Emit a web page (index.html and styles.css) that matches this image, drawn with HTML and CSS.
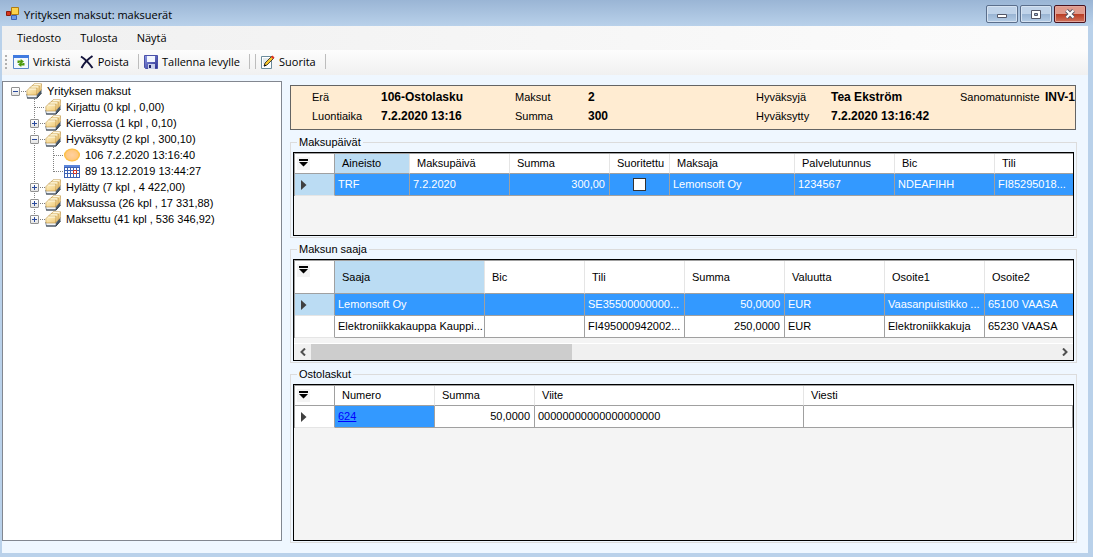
FILE: index.html
```html
<!DOCTYPE html>
<html lang="fi">
<head>
  <meta charset="UTF-8" />
  <title>Yrityksen maksut: maksuerät</title>
  <link rel="stylesheet" href="styles.css">
</head>
<body>

<!-- shared icons -->
<svg class="defs" aria-hidden="true">
  <defs>
    <linearGradient id="card" x1="0" y1="0" x2="1" y2="1">
      <stop offset="0" stop-color="#fff3c8"/>
      <stop offset="1" stop-color="#efc878"/>
    </linearGradient>
    <radialGradient id="coin">
      <stop offset="0" stop-color="#ffd0a0"/>
      <stop offset="0.7" stop-color="#ffc880"/>
      <stop offset="1" stop-color="#fbb92a"/>
    </radialGradient>
    <linearGradient id="disk" x1="0" y1="0" x2="1" y2="1">
      <stop offset="0" stop-color="#8f9be6"/>
      <stop offset="1" stop-color="#2b2f8e"/>
    </linearGradient>
    <symbol id="i-folder" viewBox="0 0 16 16">
      <path d="M10.500 12.500 15.500 6v4L11 15.500z" fill="#4a5a68"/>
      <path d="M.5 11.500h10.500v3.500H1.500z" fill="#eef2f6" stroke="#5c6c7c" stroke-width=".7"/>
      <path d="M1 15h10l4.500-5" fill="none" stroke="#303c48"/>
      <path d="M6 3 8 .8h7.600l-.4 6.200-2.200 2z" fill="url(#card)" stroke="#b98d3e" stroke-width=".6"/>
      <path d="M3.500 5.200 5.500 3h7.800l-.3 6-2 2z" fill="url(#card)" stroke="#b98d3e" stroke-width=".6"/>
      <path d="M.8 7.800 3.200 5.200H11l-.3 6.800H1z" fill="url(#card)" stroke="#b98d3e" stroke-width=".6"/>
      <path d="M3.200 6h7M5.800 3.800h6.600M8.200 1.600h6.400" stroke="#fffbe8"/>
    </symbol>
    <symbol id="i-filter" viewBox="0 0 13 13">
      <path fill="#f4f4f4" d="M0 0h13v13H0z"/>
      <path d="M2 2h9v2H2zM2 5h9L6.500 9.500z"/>
    </symbol>
    <symbol id="i-row" viewBox="0 0 8 12">
      <path d="M1 1v10L6.500 6z" fill="#404040"/>
    </symbol>
  </defs>
</svg>

<div class="window">
  <header class="titlebar">
    <svg class="app-icon" viewBox="0 0 14 14" width="14" height="14">
      <path d="M5.500.5h7v7h-7z" fill="#fdd34d" stroke="#b07c10"/>
      <path d="M.5 4.500h4v4h-4z" fill="#d8371c" stroke="#8c1c0c"/>
      <path d="M5.500 8.500h5v4h-5z" fill="#6d9ae8" stroke="#3c62b5"/>
    </svg>
    <h1>Yrityksen maksut: maksuerät</h1>
    <div class="window-buttons">
      <button type="button" aria-label="Pienennä">
        <svg viewBox="0 0 12 10" width="12" height="10"><path d="M1.500 5.500h9v3h-9z" fill="#fff" stroke="#535666"/></svg>
      </button>
      <button type="button" aria-label="Suurenna">
        <svg viewBox="0 0 12 10" width="12" height="10"><path d="M1.500 1.500h9v8h-9z" fill="#fff" stroke="#535666"/><path d="M4.500 4.500h3v2h-3z" fill="#9db7d4" stroke="#535666"/></svg>
      </button>
      <button type="button" class="close" aria-label="Sulje">
        <svg viewBox="0 0 12 10" width="12" height="10"><path d="M2.500 1.500l7 7M9.500 1.500l-7 7" stroke="#535666" stroke-width="4"/><path d="M2.500 1.500l7 7M9.500 1.500l-7 7" stroke="#fff" stroke-width="2.200"/></svg>
      </button>
    </div>
  </header>

  <nav class="menubar">
    <button type="button">Tiedosto</button>
    <button type="button">Tulosta</button>
    <button type="button">Näytä</button>
  </nav>

  <div class="toolbar">
    <span class="grip"></span>
    <button type="button">
      <svg viewBox="0 0 16 16" width="16" height="16">
        <path d="M.5 1.500h15v13H.5z" fill="#f4f8fe" stroke="#5a86c8"/>
        <path d="M0 1h16v3H0z" fill="#3f7ae0"/>
        <path d="M4.500 9V6.500h3.200V5L11 7.500 7.700 10V8.500H6.300V9zM11.500 9v2.500H8.300V13L5 10.500 8.300 8v1.500h1.400V9z" fill="#4c9a0c"/>
      </svg>
      Virkistä
    </button>
    <button type="button">
      <svg viewBox="0 0 14 14" width="14" height="14">
        <path d="M1 1.500C5 4 9 8 12.500 13M12.500 1C8 4 4 8 1.500 13" fill="none" stroke="#14143c" stroke-width="2"/>
      </svg>
      Poista
    </button>
    <span class="sep"></span>
    <button type="button">
      <svg viewBox="0 0 14 14" width="14" height="14">
        <path d="M.5.5h13v13h-12l-1-1z" fill="url(#disk)" stroke="#4a50a8"/>
        <path d="M3 1h8v6H3z" fill="#f2f6ff"/>
        <path d="M4 9h7v5H4z" fill="#c9d0ea"/>
        <path d="M5 10h2v3H5z" fill="#23286e"/>
      </svg>
      Tallenna levylle
    </button>
    <span class="sep"></span>
    <span class="sep"></span>
    <button type="button">
      <svg viewBox="0 0 14 14" width="14" height="14">
        <path d="M.5 1.500h10v12H.5z" fill="#fff" stroke="#6c8c9c"/>
        <path d="M2 4h6M2 6h5M2 8h3" stroke="#c4d4dc"/>
        <path d="M3 11l1-3 6.500-6.500 2 2L6 10z" fill="#f5c52c" stroke="#222" stroke-width=".8"/>
        <path d="M10 2l1.500-1.500 2 2L12 4z" fill="#e03020"/>
        <path d="M3 11.500l.8-2.200 1.500 1.400z"/>
      </svg>
      Suorita
    </button>
    <span class="sep"></span>
  </div>

  <main class="content">
    <aside class="tree">
      <ul>
        <li>
          <div class="node"><button type="button" class="toggle open" aria-label="Sulje"></button><span class="link"></span><svg><use href="#i-folder"/></svg>Yrityksen maksut</div>
          <ul>
            <li><div class="node"><span class="link leaf"></span><svg><use href="#i-folder"/></svg>Kirjattu (0 kpl , 0,00)</div></li>
            <li><div class="node"><button type="button" class="toggle" aria-label="Avaa"></button><span class="link"></span><svg><use href="#i-folder"/></svg>Kierrossa (1 kpl , 0,10)</div></li>
            <li>
              <div class="node"><button type="button" class="toggle open" aria-label="Sulje"></button><span class="link"></span><svg><use href="#i-folder"/></svg>Hyväksytty (2 kpl , 300,10)</div>
              <ul>
                <li><div class="node"><span class="link leaf"></span><svg viewBox="0 0 16 16"><ellipse cx="8" cy="8" rx="8" ry="6.500" fill="url(#coin)"/></svg>106 7.2.2020 13:16:40</div></li>
                <li><div class="node"><span class="link leaf"></span><svg viewBox="0 0 16 16">
                  <path d="M0 2h16v13H0z" fill="#3e62b4"/>
                  <path d="M0 2h16v2H0z" fill="#5b86dc"/>
                  <path d="M1 5h2v2H1zM4 5h2v2H4zM7 5h2v2H7zM10 5h2v2h-2zM13 5h2v2h-2zM1 8h2v2H1zM4 8h2v2H4zM7 8h2v2H7zM13 8h2v2h-2zM1 11h2v3H1zM4 11h2v3H4zM7 11h2v3H7zM10 11h2v3h-2zM13 11h2v3h-2z" fill="#fff"/>
                  <path d="M9.500 7.500h3v3h-3z" fill="#fff" stroke="#d8301c"/>
                </svg>89 13.12.2019 13:44:27</div></li>
              </ul>
            </li>
            <li><div class="node"><button type="button" class="toggle" aria-label="Avaa"></button><span class="link"></span><svg><use href="#i-folder"/></svg>Hylätty (7 kpl , 4 422,00)</div></li>
            <li><div class="node"><button type="button" class="toggle" aria-label="Avaa"></button><span class="link"></span><svg><use href="#i-folder"/></svg>Maksussa (26 kpl , 17 331,88)</div></li>
            <li><div class="node"><button type="button" class="toggle" aria-label="Avaa"></button><span class="link"></span><svg><use href="#i-folder"/></svg>Maksettu (41 kpl , 536 346,92)</div></li>
          </ul>
        </li>
      </ul>
    </aside>

    <section class="details">
      <dl class="summary">
        <dt>Erä</dt><dd>106-Ostolasku</dd>
        <dt>Maksut</dt><dd>2</dd>
        <dt>Hyväksyjä</dt><dd>Tea Ekström</dd>
        <dt>Sanomatunniste</dt><dd>INV-1</dd>
        <dt>Luontiaika</dt><dd>7.2.2020 13:16</dd>
        <dt>Summa</dt><dd>300</dd>
        <dt>Hyväksytty</dt><dd>7.2.2020 13:16:42</dd>
      </dl>

      <fieldset class="group">
        <legend>Maksupäivät</legend>
        <div class="grid dates">
          <table>
            <colgroup>
              <col class="w-head"><col class="w-75"><col class="w-100"><col class="w-100"><col class="w-60"><col class="w-125"><col class="w-100"><col class="w-100"><col>
            </colgroup>
            <thead>
              <tr>
                <th class="corner"><svg><use href="#i-filter"/></svg></th>
                <th class="current">Aineisto</th><th>Maksupäivä</th><th>Summa</th><th>Suoritettu</th><th>Maksaja</th><th>Palvelutunnus</th><th>Bic</th><th>Tili</th>
              </tr>
            </thead>
            <tbody>
              <tr class="selected">
                <td class="marker"><svg><use href="#i-row"/></svg></td>
                <td>TRF</td><td>7.2.2020</td><td class="num">300,00</td><td class="check"><input type="checkbox" aria-label="Suoritettu"></td><td>Lemonsoft Oy</td><td>1234567</td><td>NDEAFIHH</td><td>FI85295018...</td>
              </tr>
            </tbody>
          </table>
        </div>
      </fieldset>

      <fieldset class="group">
        <legend>Maksun saaja</legend>
        <div class="grid">
          <table class="payees">
            <colgroup>
              <col class="w-head"><col class="w-150"><col class="w-100"><col class="w-100"><col class="w-100"><col class="w-100"><col class="w-100"><col>
            </colgroup>
            <thead>
              <tr>
                <th class="corner"><svg><use href="#i-filter"/></svg></th>
                <th class="current">Saaja</th><th>Bic</th><th>Tili</th><th>Summa</th><th>Valuutta</th><th>Osoite1</th><th>Osoite2</th>
              </tr>
            </thead>
            <tbody>
              <tr class="selected">
                <td class="marker"><svg><use href="#i-row"/></svg></td>
                <td>Lemonsoft Oy</td><td></td><td>SE35500000000...</td><td class="num">50,0000</td><td>EUR</td><td>Vaasanpuistikko ...</td><td>65100 VAASA</td>
              </tr>
              <tr>
                <td class="marker"></td>
                <td>Elektroniikkakauppa Kauppi...</td><td></td><td>FI495000942002...</td><td class="num">250,0000</td><td>EUR</td><td>Elektroniikkakuja</td><td>65230 VAASA</td>
              </tr>
            </tbody>
          </table>
          <div class="scrollbar">
            <button type="button" aria-label="Vasemmalle"><svg viewBox="0 0 8 8"><path d="M6 .5 2.500 4 6 7.500"/></svg></button>
            <div class="track"><div class="thumb"></div></div>
            <button type="button" aria-label="Oikealle"><svg viewBox="0 0 8 8"><path d="M2 .5 5.500 4 2 7.500"/></svg></button>
          </div>
        </div>
      </fieldset>

      <fieldset class="group fill">
        <legend>Ostolaskut</legend>
        <div class="grid">
          <table class="invoices">
            <colgroup>
              <col class="w-head"><col class="w-100"><col class="w-100"><col class="w-269"><col>
            </colgroup>
            <thead>
              <tr>
                <th class="corner"><svg><use href="#i-filter"/></svg></th>
                <th>Numero</th><th>Summa</th><th>Viite</th><th>Viesti</th>
              </tr>
            </thead>
            <tbody>
              <tr>
                <td class="marker"><svg><use href="#i-row"/></svg></td>
                <td class="active"><a href="#">624</a></td><td class="num">50,0000</td><td>00000000000000000000</td><td></td>
              </tr>
            </tbody>
          </table>
        </div>
      </fieldset>
    </section>
  </main>
</div>

</body>
</html>
```

FILE: styles.css
```css
* {
  box-sizing: border-box;
}
body {
  margin: 0;
  font-family: "Liberation Sans", Arial, sans-serif;
  font-size: 11px;
  line-height: 13px;
  color: #000;
}
button {
  font: inherit;
  color: inherit;
  padding: 0;
  border: 0;
  background: none;
}
ul, dl, dd {
  margin: 0;
  padding: 0;
  list-style: none;
}
.defs {
  display: block;
  width: 0;
  height: 0;
}

/* window frame */
.window {
  display: flex;
  flex-direction: column;
  min-height: 100vh;
  padding: 0 5px 4px 2px;
  background: linear-gradient(#9ab5d5, #b9d1ea 26px);
}
.titlebar {
  display: flex;
  align-items: center;
  gap: 4px;
  height: 26px;
  padding: 2px 2px 0 4px;
  font-family: "Open Sans", sans-serif;
}
.titlebar h1 {
  flex: 1;
  margin: 0;
  font-size: 11px;
  font-weight: normal;
}
.window-buttons {
  display: flex;
  gap: 2px;
}
.window-buttons button {
  display: flex;
  align-items: center;
  justify-content: center;
  width: 32px;
  height: 18px;
  border: 1px solid #5b6f8c;
  border-radius: 2px;
  box-shadow: inset 0 0 0 1px #d5e2f1;
  background: linear-gradient(#c0d3e9 50%, #98b3d2 50%, #b5cde6);
}
.window-buttons .close {
  border-color: #4a1420;
  box-shadow: inset 0 0 0 1px #e3a69b;
  background: linear-gradient(#e09a8c 50%, #b93b22 50%, #d1735c);
}

/* menu and toolbar */
.menubar {
  display: flex;
  gap: 19px;
  height: 24px;
  padding: 0 0 2px 15px;
  background: linear-gradient(90deg, #f0f0f0, #fcfcfc);
  font-family: "Open Sans", sans-serif;
}
.toolbar {
  display: flex;
  align-items: center;
  height: 25px;
  padding: 0 0 2px 3px;
  background: linear-gradient(#fdfdfd, #f0f0f0);
  font-family: "Open Sans", sans-serif;
}
.toolbar button {
  display: flex;
  align-items: center;
  gap: 4px;
  margin-right: 9px;
}
.grip {
  width: 2px;
  height: 14px;
  margin-right: 6px;
  background: repeating-linear-gradient(#b0b0b0 0 2px, transparent 2px 4px);
}
.sep {
  width: 1px;
  height: 15px;
  margin-right: 5px;
  background: #bdbdbd;
}

.content {
  flex: 1;
  display: flex;
  gap: 8px;
  padding: 5px 11px 10px 0;
  background: #eff7ff;
}

/* tree */
.tree {
  width: 280px;
  margin: 1px 0 2px;
  padding: 1px 0 0 8px;
  border: 1px solid #828790;
  background: #fff;
}
.tree ul ul {
  margin-left: 19px;
}
.tree ul ul li {
  background: repeating-linear-gradient(#808080 0 1px, transparent 1px 2px) 4px 0 / 1px 100% no-repeat;
}
.tree ul ul li:last-child {
  background-size: 1px 9px;
}
.node {
  display: flex;
  align-items: center;
  height: 16px;
  white-space: nowrap;
}
.node svg {
  width: 16px;
  height: 16px;
  margin-right: 5px;
}
.link {
  width: 6px;
  height: 1px;
  background: repeating-linear-gradient(90deg, transparent 0 1px, #808080 1px 2px);
}
.link.leaf {
  width: 11px;
  margin-left: 4px;
}
.toggle {
  width: 9px;
  height: 9px;
  border: 1px solid #919191;
  border-radius: 1px;
  background:
    linear-gradient(#2a4a9c, #2a4a9c) center / 5px 1px no-repeat,
    linear-gradient(#2a4a9c, #2a4a9c) center / 1px 5px no-repeat,
    linear-gradient(#fff, #e4e4e4);
}
.toggle.open {
  background:
    linear-gradient(#2a4a9c, #2a4a9c) center / 5px 1px no-repeat,
    linear-gradient(#fff, #e4e4e4);
}

/* batch summary */
.details {
  flex: 1;
  min-width: 0;
  display: flex;
  flex-direction: column;
  gap: 5px;
  padding-top: 5px;
}
.summary {
  display: grid;
  grid-template-columns: 69px 134px 73px 168px 75px 129px 85px 1fr;
  grid-auto-rows: 19px;
  align-items: center;
  height: 45px;
  margin: 0 1px 1px 0;
  padding: 2px 0 0 21px;
  border: 1px solid #646464;
  background: #ffecd2;
  white-space: nowrap;
  overflow: hidden;
}
.summary dd {
  font-size: 12px;
  font-weight: bold;
}

/* grids */
.group {
  display: flex;
  flex-direction: column;
  min-width: 0;
  margin: 0;
  padding: 3px 2px 1px;
  border: 1px solid #dcdcdc;
}
.group legend {
  margin-left: 4px;
  padding: 0 2px;
}
.group.fill {
  flex: 1;
}
.fill .grid {
  flex: 1;
}
.grid {
  border: 1px solid #000;
  background: #f4f4f4;
}
.grid.dates {
  min-height: 84px;
}
table {
  table-layout: fixed;
  width: 100%;
  border-spacing: 0;
  border-top: 1px solid #a0a0a0;
  border-left: 1px solid #a0a0a0;
}
.w-head { width: 40px; }
.w-60 { width: 60px; }
.w-75 { width: 75px; }
.w-100 { width: 100px; }
.w-125 { width: 125px; }
.w-150 { width: 150px; }
.w-269 { width: 269px; }
th, td {
  height: 22px;
  padding: 0 0 0 3px;
  border-right: 1px solid #a0a0a0;
  border-bottom: 1px solid #a0a0a0;
  background: #fff;
  text-align: left;
  font-weight: normal;
  white-space: nowrap;
}
th {
  height: 20px;
  padding-left: 7px;
  border-right-color: #e5e5e5;
}
.payees th {
  height: 33px;
}
th:last-child, td:last-child {
  border-right: 0;
}
.invoices td:last-child {
  border-right: 1px solid #a0a0a0;
}
th.current {
  background: #bbdcf3;
}
th.corner {
  padding: 3px 2px 0;
  border-right-color: #a0a0a0;
  vertical-align: top;
}
.corner svg {
  display: block;
  width: 13px;
  height: 13px;
}
.selected td, td.active {
  background: #3399ff;
  color: #fff;
}
td.marker {
  padding: 0 5px;
  border-bottom-color: #e5e5e5;
}
.selected td.marker {
  background: #bbdcf3;
}
.marker svg {
  display: block;
  width: 8px;
  height: 12px;
}
td.num {
  padding-right: 4px;
  text-align: right;
}
td.check {
  padding: 0;
}
.check input {
  appearance: none;
  display: block;
  width: 13px;
  height: 13px;
  margin: 0 auto;
  border: 1px solid #333;
  background: #fff;
}
td a {
  color: #0000ff;
}

.scrollbar {
  display: flex;
  height: 17px;
  margin-top: 5px;
  border-top: 1px solid #fff;
  background: #f0f0f0;
}
.scrollbar button {
  width: 17px;
}
.scrollbar svg {
  display: block;
  width: 8px;
  height: 8px;
  margin: 0 auto;
  fill: none;
  stroke: #505050;
  stroke-width: 2;
}
.track {
  flex: 1;
}
.thumb {
  width: 35%;
  height: 100%;
  background: #cdcdcd;
}
```
